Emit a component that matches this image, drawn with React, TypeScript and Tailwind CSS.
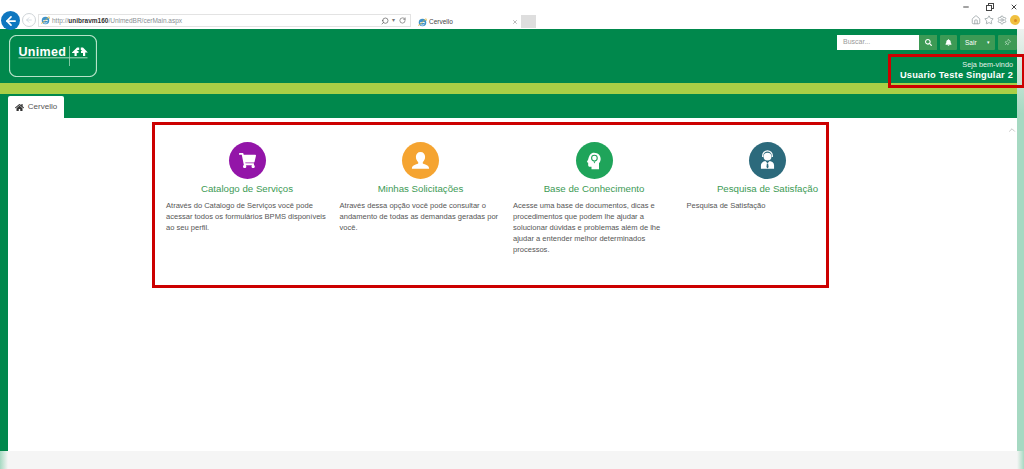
import React from 'react';
import { ArrowLeft, ArrowRight, ChevronUp, Home, Minus, Pin, RotateCw, Search, Settings, Star, X } from 'lucide-react';
import { FaBell, FaHome, FaSearch, FaShoppingCart } from 'react-icons/fa';

function HeadIcon() {
  return (
    <svg viewBox="0 0 24 24" className="size-[20px] -scale-x-100">
      <path fill="#fff" d="M12 2c-5 0-8 3.400-8 7.600 0 2.400 1 3.800 2 5.200V22h9v-3h2.200c1 0 1.800-.8 1.800-1.800V14l1.600-.7-1.700-3.400C18 5.200 15.600 2 12 2z" />
      <circle cx="11.500" cy="8.500" r="3.400" fill="none" stroke="#1fa45a" strokeWidth="1.300" />
      <path d="M10.300 12.500h2.400l-1.200 2.500z" fill="#1fa45a" />
    </svg>
  );
}

function BustIcon() {
  return (
    <svg viewBox="0 0 24 24" className="size-[23px]" fill="#fff">
      <path d="M12 3c-3 0-4.800 2.200-4.800 5.200 0 2.400 1 4.400 2.400 5.600v1.400C7 16.400 3 17 3 20.500h18c0-3.500-4-4.100-6.600-5.300v-1.400c1.400-1.200 2.400-3.200 2.400-5.600C16.800 5.200 15 3 12 3z" />
    </svg>
  );
}

function AgentIcon() {
  return (
    <svg viewBox="0 0 24 24" className="size-[21px]">
      <circle cx="12" cy="7.500" r="4.500" fill="#fff" />
      <path d="M6.500 8V6.500a5.500 5.500 0 0 1 11 0V8" fill="none" stroke="#fff" strokeWidth="1.400" />
      <path fill="#fff" d="M4.500 21.500v-4c0-3 2.500-4.500 5-4.800l2.500 2.300 2.500-2.300c2.500.3 5 1.800 5 4.800v4z" />
      <path fill="#2c6a7c" d="M11.300 15.500h1.400l.5 4-1.200 1.500-1.200-1.500z" />
    </svg>
  );
}

function IeIcon() {
  return (
    <svg viewBox="0 0 12 12" className="size-[9px] shrink-0">
      <circle cx="6" cy="6" r="5" fill="#3f93c9" />
      <path d="M3 6h6M3.500 8.500c1.500 1.500 4 1 5-.5" fill="none" stroke="#fff" strokeWidth="1.200" />
      <path d="M0 10c3-1 8-6 10-9 2 0 2 2 1 3" fill="none" stroke="#e8b93a" strokeWidth="1" />
    </svg>
  );
}

function UnimedLogo() {
  return (
    <svg width="88" height="42" viewBox="0 0 88 42" className="mt-[6px] block">
      <rect x="0.500" y="0.500" width="87" height="41" rx="7" fill="none" stroke="#b5e3c8" strokeWidth="1.200" />
      <text x="9.500" y="21" fill="#fff" fontFamily="Liberation Sans" fontWeight="bold" fontSize="12.500" letterSpacing="0.300">
        Unimed
      </text>
      <path d="M9.500 22.800h69" stroke="#d6efe1" strokeWidth="0.800" />
      <path d="M60.500 11v20" stroke="#9fd6b8" strokeWidth="0.800" />
      <path fill="#fff" d="M63 17.500l5-5h2.200V15H69l-1.400 1h1.900v2h-1.800v3h-2.200v-3H63z" />
      <path fill="#fff" d="M71.800 12.500H74l4.800 5h-2.600V21H74v-3h-2v-2h1.400L72 15h-.2z" />
    </svg>
  );
}

const items = [
  {
    title: 'Catalogo de Serviços',
    color: 'bg-[#9315a8]',
    icon: <FaShoppingCart className="size-[17px] text-white" />,
    text: 'Através do Catalogo de Serviços você pode acessar todos os formulários BPMS disponíveis ao seu perfil.',
  },
  {
    title: 'Minhas Solicitações',
    color: 'bg-[#f5a431]',
    icon: <BustIcon />,
    text: 'Através dessa opção você pode consultar o andamento de todas as demandas geradas por você.',
  },
  {
    title: 'Base de Conhecimento',
    color: 'bg-[#1fa45a]',
    icon: <HeadIcon />,
    text: 'Acesse uma base de documentos, dicas e procedimentos que podem lhe ajudar a solucionar dúvidas e problemas além de lhe ajudar a entender melhor determinados processos.',
  },
  {
    title: 'Pesquisa de Satisfação',
    color: 'bg-[#2c6a7c]',
    icon: <AgentIcon />,
    text: 'Pesquisa de Satisfação',
  },
];

export default function App() {
  return (
    <div className="relative flex h-[469px] w-[1024px] flex-col overflow-hidden bg-white font-['Liberation_Sans',Arial,sans-serif]">
      {/* browser chrome */}
      <div className="flex h-[29px] shrink-0 items-end bg-white">
        <div className="z-10 mb-[-1px] ml-[1px] flex size-[19px] items-center justify-center rounded-full bg-[#0f77c0]">
          <ArrowLeft className="size-[14px] text-white" strokeWidth={3} />
        </div>
        <div className="mb-[2px] ml-[2px] flex size-[14px] items-center justify-center rounded-full border border-[#cfd4d8]">
          <ArrowRight className="size-[8px] -scale-x-100 text-[#c3ccd4]" />
        </div>
        <div className="mb-[2px] ml-[2px] flex h-[13px] w-[373px] items-center border border-[#e3e3e3] pl-[2px] pr-[4px]">
          <IeIcon />
          <span className="ml-[2px] text-[6.500px] text-[#8a8f95]">
            http://<b className="text-[#333]">unibravm160</b>/UnimedBR/cerMain.aspx
          </span>
          <Search className="ml-auto size-[8px] -scale-x-100 text-[#555]" />
          <span className="ml-[3px] text-[6px] text-[#777]">▾</span>
          <RotateCw className="ml-[4px] size-[7px] text-[#555]" />
        </div>
        <div className="ml-[3px] flex h-[14px] w-[107px] items-center pl-[4px]">
          <IeIcon />
          <span className="ml-[2px] text-[6.500px] text-[#444]">Cervello</span>
          <X className="ml-auto mr-[3px] size-[6px] text-[#777]" />
        </div>
        <div className="mb-[1px] h-[13px] w-[15px] bg-[#dedede]" />
        <div className="ml-auto mr-[4px] flex flex-col items-end self-start pt-[3px]">
          <div className="flex h-[8px] items-center gap-[16px] pr-[2px] text-[#444]">
            <Minus className="size-[8px]" strokeWidth={3} />
            <div className="relative size-[8px]">
              <div className="absolute right-0 top-0 size-[6px] border border-[#444]" />
              <div className="absolute bottom-0 left-0 size-[6px] border border-[#444] bg-white" />
            </div>
            <X className="size-[8px]" strokeWidth={3} />
          </div>
          <div className="mt-[4px] flex h-[10px] items-center gap-[3px] text-[#9aa3a6]">
            <Home className="size-[10px]" />
            <Star className="size-[10px]" />
            <Settings className="size-[10px]" />
            <div className="flex size-[10px] items-center justify-center rounded-full bg-[#f0c040]">
              <div className="size-[3px] rounded-full bg-[#d98a20]" />
            </div>
          </div>
        </div>
      </div>

      <div className="flex h-[422px] shrink-0">
        <div className="flex w-[1017px] flex-col">
          {/* header */}
          <div className="flex h-[54px] shrink-0 items-start justify-between bg-[#00884c] pl-[9px]">
            <UnimedLogo />
            <div className="flex flex-col items-end">
              <div className="mt-[6px] flex items-stretch">
                <div className="flex h-[15px] w-[82px] items-center bg-white pl-[6px] text-[7px] text-[#999]">Buscar...</div>
                <div className="flex w-[18px] items-center justify-center bg-[#3d9a55]">
                  <FaSearch className="size-[7px] text-white" />
                </div>
                <div className="ml-[3px] flex w-[17px] items-center justify-center rounded-[1px] bg-[#3d9a55]">
                  <FaBell className="size-[7px] text-white" />
                </div>
                <div className="ml-[3px] flex w-[35px] items-center rounded-[1px] bg-[#3d9a55] pl-[5px] text-[6.500px] text-white">
                  Sair
                  <span className="ml-auto mr-[5px] text-[5px]">▾</span>
                </div>
                <div className="ml-[3px] flex w-[19px] items-center justify-center rounded-[1px] bg-[#3d9a55]">
                  <Pin className="size-[7px] rotate-45 text-[#cfe8d4]" />
                </div>
              </div>
              <div className="mt-[10px] pr-[4px] text-[7.300px] leading-[10px] text-[#e3f3ea]">Seja bem-vindo</div>
              <div className="pr-[4px] text-[9.300px] font-bold leading-[11px] tracking-[0.2px] text-white">Usuario Teste Singular 2</div>
            </div>
          </div>
          <div className="h-[11px] shrink-0 bg-[#a9cf46]" />

          {/* tabs */}
          <div className="flex h-[24px] shrink-0 items-end bg-[#00884c] pl-[8px]">
            <div className="flex h-[22px] w-[56px] items-center justify-center gap-[4px] rounded-t-[2px] bg-white text-[8px] text-[#555]">
              <FaHome className="size-[9px] text-[#333]" />
              Cervello
            </div>
          </div>

          {/* content */}
          <div className="flex flex-1">
            <div className="w-[8px] bg-[#00884c]" />
            <div className="relative flex-1 bg-white pl-[158px] pt-[24px]">
              <div className="grid w-[694px] grid-cols-4">
                {items.map((item) => (
                  <div key={item.title} className="w-[162px]">
                    <div className="flex flex-col items-center">
                      <div className={`flex size-[37px] items-center justify-center rounded-full ${item.color}`}>{item.icon}</div>
                      <div className="mt-[4px] whitespace-nowrap text-[9.700px] leading-[12px] text-[#3d9a55]">{item.title}</div>
                    </div>
                    <p className="mt-[5px] text-[7.550px] leading-[11px] text-[#555]">{item.text}</p>
                  </div>
                ))}
              </div>
              <ChevronUp className="absolute right-0 top-[7px] size-[10px] text-[#bbb]" />
            </div>
          </div>
        </div>
        <div className="w-[7px] bg-gradient-to-b from-[#eef2ef] to-[#a6d9c2] to-20%" />
      </div>

      {/* footer */}
      <div className="flex flex-1 justify-between bg-[#f5f5f5]">
        <div className="w-[8px] bg-gradient-to-r from-[#a6d9c2] to-[#f5f5f5]" />
        <div className="w-[7px] bg-gradient-to-l from-[#a6d9c2] to-[#f5f5f5]" />
      </div>

      {/* red annotation boxes */}
      <div className="absolute left-[152px] top-[122px] h-[166px] w-[677px] border-[3px] border-[#cc0000]" />
      <div className="absolute left-[888px] top-[54px] h-[34px] w-[136px] border-[3px] border-r-[2px] border-[#cc0000]" />
    </div>
  );
}
